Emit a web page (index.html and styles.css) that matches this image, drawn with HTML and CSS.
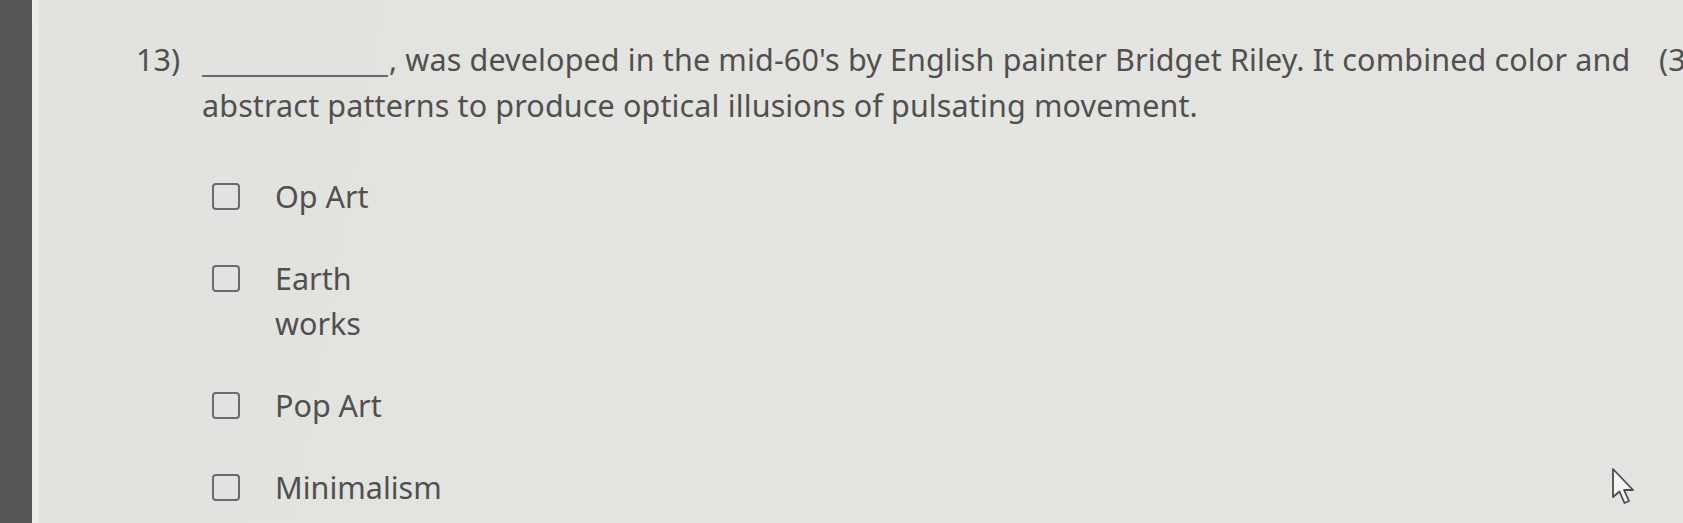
FILE: index.html
```html
<!DOCTYPE html>
<html>
<head>
<meta charset="utf-8">
<link rel="stylesheet" href="styles.css">
</head>
<body>
<div class="screen">
  <div class="bezel"></div>
  <div class="edge"></div>
  <main class="page">
    <div class="question">
      <div class="qnum">13)</div>
      <div class="qbody">
        <p class="qtext"><span class="blank"></span>, was developed in the mid-60's by English painter Bridget Riley. It combined color and abstract patterns to produce optical illusions of pulsating movement.</p>
        <ul class="options">
          <li class="option"><span class="box"></span><span class="label">Op Art</span></li>
          <li class="option"><span class="box"></span><span class="label narrow">Earth works</span></li>
          <li class="option"><span class="box"></span><span class="label">Pop Art</span></li>
          <li class="option"><span class="box"></span><span class="label">Minimalism</span></li>
        </ul>
      </div>
      <div class="points">(3 points)</div>
    </div>
  </main>
  <svg class="cursor" width="34" height="44" viewBox="0 0 34 44">
    <path d="M2 2 L2 30 L8.5 24.5 L13.5 36 L18 34 L13 23 L22 23 Z" fill="#f4f4f2" stroke="#4c4c4c" stroke-width="1.8" stroke-linejoin="round"/>
  </svg>
</div>
</body>
</html>
```
FILE: styles.css
```css
html, body {
  margin: 0;
  padding: 0;
  width: 1683px;
  height: 523px;
  overflow: hidden;
}

.screen {
  position: relative;
  display: flex;
  width: 1683px;
  height: 523px;
  background: linear-gradient(100deg, #e1e1de 0%, #e4e4e1 45%, #e3e3e0 100%);
  font-family: "Noto Sans", "Open Sans", sans-serif;
  color: #505050;
  overflow: hidden;
}

.bezel {
  flex: 0 0 32px;
  background: #575757;
}

.edge {
  flex: 0 0 7px;
  background: #ececea;
}

.page {
  flex: 1;
  padding-top: 36px;
}

.question {
  display: flex;
  font-size: 30.5px;
  line-height: 46px;
}

.qnum {
  flex: 0 0 66px;
  padding-left: 97px;
}

.qbody {
  flex: 0 0 1440px;
}

.qtext {
  margin: 0;
  width: 1440px;
  letter-spacing: 0.13px;
}

.blank {
  display: inline-block;
  width: 186px;
  border-bottom: 2px solid #6a6a6a;
  vertical-align: -6px;
  margin-right: 1px;
}

.points {
  white-space: nowrap;
  padding-left: 17px;
}

.options {
  list-style: none;
  margin: 0;
  padding: 46px 0 0 10px;
  display: flex;
  flex-direction: column;
  gap: 37px;
}

.option {
  display: flex;
  align-items: flex-start;
  line-height: 45px;
}

.box {
  flex: 0 0 auto;
  width: 24px;
  height: 23px;
  border: 2px solid #6b6b6b;
  border-radius: 4px;
  margin-top: 9px;
  margin-right: 35px;
}

.label.narrow {
  width: 90px;
}

.cursor {
  position: absolute;
  left: 1611px;
  top: 467px;
}
```
